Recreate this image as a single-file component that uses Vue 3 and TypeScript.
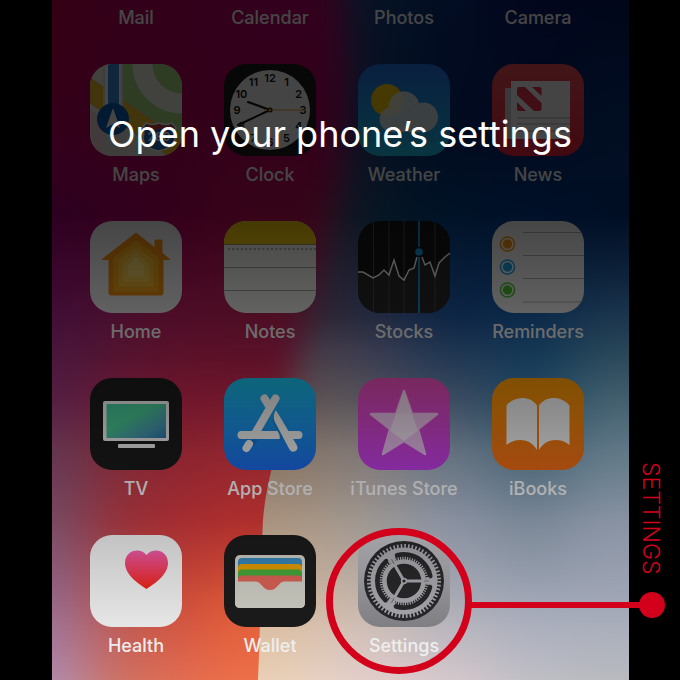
<script setup lang="ts">
type Rgb = [number, number, number]

interface Column {
  x: number
  width: number
  colors: string[]
}

const rows: string[][] = [
  ['Maps', 'Clock', 'Weather', 'News'],
  ['Home', 'Notes', 'Stocks', 'Reminders'],
  ['TV', 'App Store', 'iTunes Store', 'iBooks'],
  ['Health', 'Wallet', 'Settings'],
]
const topLabels: string[] = ['Mail', 'Calendar', 'Photos', 'Camera']
const apps: string[] = rows.flat()

// Share of light that the shade lets through, by height.
const shade: [number, number][] = [
  [0, 0.27], [215, 0.27], [313, 0.39], [430, 0.59], [535, 0.77], [627, 0.91], [680, 0.97],
]
function light(y: number): number {
  for (let i = 1; i < shade.length; i++) {
    const [y0, a] = shade[i - 1]
    const [y1, b] = shade[i]
    if (y <= y1) return a + ((b - a) * (y - y0)) / (y1 - y0)
  }
  return 0.97
}

function parse(hex: string): Rgb {
  return [1, 3, 5].map((i) => parseInt(hex.slice(i, i + 2), 16)) as Rgb
}
// Wallpaper tones are listed as seen through the shade, so undo it here.
function lift(hex: string, y: number): string {
  const t = light(y)
  return `rgb(${parse(hex).map((c) => Math.min(255, Math.round(c / t))).join(',')})`
}

const stops: number[] = [0, 130, 215, 313, 350, 400, 450, 520, 600, 680]
const leftColumns: Column[] = [
  { x: -150, width: 185, colors: ['#330012', '#33001a', '#2d0020', '#3f0e36', '#47163c', '#522044', '#623650', '#764b64', '#94688a', '#b08cae'] },
  { x: 35, width: 70, colors: ['#32001a', '#33001a', '#30001c', '#480e2c', '#52122e', '#6c1832', '#7c2836', '#963038', '#b8504c', '#cf7060'] },
  { x: 105, width: 60, colors: ['#33001a', '#33001a', '#34001a', '#4e0c26', '#5a1028', '#70162c', '#8a222e', '#a62c30', '#cc4c38', '#e46c50'] },
  { x: 165, width: 250, colors: ['#32001c', '#32001a', '#360418', '#4c0e24', '#581028', '#72182a', '#90262e', '#ae2e2c', '#e05a36', '#ee7048'] },
]
const rightColumns: Column[] = [
  { x: -150, width: 400, colors: ['#28081f', '#280c1f', '#28121e', '#34242e', '#463440', '#5c4a4c', '#84705f', '#a8927e', '#d2b496', '#ead0b4'] },
  { x: 250, width: 50, colors: ['#181024', '#200a20', '#1c1522', '#2c2634', '#443c48', '#5e5656', '#82766e', '#a69688', '#ccb6a6', '#e6d2c6'] },
  { x: 300, width: 60, colors: ['#041224', '#041120', '#041522', '#20283e', '#363a50', '#54525e', '#7c7678', '#9a9694', '#beb4ac', '#e2cccc'] },
  { x: 360, width: 80, colors: ['#020c22', '#010a1e', '#001226', '#0c2444', '#1e3450', '#3c4c60', '#62707e', '#8890a0', '#a8aab4', '#d4c8cc'] },
  { x: 440, width: 80, colors: ['#02061c', '#010a1e', '#001028', '#0a2848', '#123654', '#224a64', '#466274', '#788594', '#a0a6b6', '#bfbec6'] },
  { x: 520, width: 200, colors: ['#01061a', '#010e22', '#000e24', '#1a344c', '#284658', '#44606e', '#607886', '#8892a2', '#a0a6b6', '#b8babf'] },
]

const hours = Array.from({ length: 12 }, (_, i) => {
  const a = ((i + 1) * Math.PI) / 6
  return { n: i + 1, x: 46 + Math.sin(a) * 33, y: 50 - Math.cos(a) * 32 }
})
const houseLevels = [
  { d: 'M46 20 68 37V70H24V37Z', color: '#ffb01a' },
  { d: 'M46 26 63 40V65H29V40Z', color: '#ffc136' },
  { d: 'M46 32 58 43V60H34V43Z', color: '#ffd04f' },
  { d: 'M46 37 53 45V55H39V45Z', color: '#ffe070' },
]
</script>

<template>
  <main class="page">
    <div class="phone">
      <svg class="wallpaper" viewBox="0 0 577 680" preserveAspectRatio="none" aria-hidden="true">
        <defs>
          <filter id="spread" filterUnits="userSpaceOnUse" x="-150" y="0" width="880" height="680" color-interpolation-filters="sRGB">
            <feGaussianBlur stdDeviation="28 0" />
          </filter>
          <filter id="edge" filterUnits="userSpaceOnUse" x="-150" y="-100" width="880" height="880" color-interpolation-filters="sRGB">
            <feGaussianBlur stdDeviation="15" />
          </filter>
          <clipPath id="upper"><rect width="577" height="425" /></clipPath>
          <clipPath id="lower"><rect y="425" width="577" height="255" /></clipPath>
          <mask id="wave" maskUnits="userSpaceOnUse" x="0" y="0" width="577" height="680">
            <g clip-path="url(#upper)">
              <path filter="url(#edge)" fill="#fff" d="M-100-100H280Q300 120 276 215C262 290 240 370 225 450L208 780H-100Z" />
            </g>
            <g clip-path="url(#lower)">
              <path fill="#fff" d="M0 400H238C228 440 214 480 211 520C208 580 209 620 206 680H0Z" />
            </g>
          </mask>
          <template v-for="(set, s) in [leftColumns, rightColumns]" :key="s">
            <linearGradient v-for="(c, i) in set" :id="`tone-${s}-${i}`" :key="i" gradientUnits="userSpaceOnUse" x1="0" y1="0" x2="0" y2="680">
              <stop v-for="(y, k) in stops" :key="k" :offset="y / 680" :stop-color="lift(c.colors[k], y)" />
            </linearGradient>
          </template>
        </defs>
        <g filter="url(#spread)">
          <rect v-for="(c, i) in rightColumns" :key="i" :x="c.x" y="0" :width="c.width" height="680" :fill="`url(#tone-1-${i})`" />
        </g>
        <g mask="url(#wave)">
          <g filter="url(#spread)">
            <rect v-for="(c, i) in leftColumns" :key="i" :x="c.x" y="0" :width="c.width" height="680" :fill="`url(#tone-0-${i})`" />
          </g>
        </g>
      </svg>

      <div class="apps">
        <button v-for="name in topLabels" :key="name" type="button" class="app">
          <span class="name">{{ name }}</span>
        </button>
        <button v-for="name in apps" :key="name" type="button" class="app">
          <svg class="icon" viewBox="0 0 92 92" aria-hidden="true">
            <g v-if="name === 'Maps'">
              <rect width="92" height="92" fill="#f1efe6" />
              <path d="M33 0H92V76L33 36Z" fill="#a5dd80" />
              <path d="M52.500 0A39.500 39.500 0 0 0 92 39.500" fill="none" stroke="#f1efe6" stroke-width="20" />
              <path d="M0 14 92 77V92H78L0 39Z" fill="#f5c52c" stroke="#dca63a" />
              <path d="M0 46 13 54V92H0Z" fill="#f4d5d8" />
              <path d="M33 62 78 92H33Z" fill="#e4e4df" />
              <path d="M13 0H33V92H13Z" fill="#e2e2dd" />
              <path d="M15 0H31V60H15Z" fill="#fff" />
              <path d="M18 0H29V54H18Z" fill="#3c8be0" />
              <circle cx="23" cy="55" r="16" fill="#0b62b8" />
              <path d="M23 44 30 64 23 60 16 64Z" fill="#fff" />
              <path d="M56 59Q62 62 69 59Q76 62 82 59L86 64Q83 68 85 74Q84 84 69 87Q54 84 53 74Q55 68 52 64Z" fill="#2a68b8" stroke="#fff" stroke-width="1.500" />
              <path d="M57 60Q63 63 69 60Q75 63 81 60L84 65H54Z" fill="#d04038" />
              <text x="69" y="77" class="shield">280</text>
            </g>
            <g v-else-if="name === 'Clock'">
              <rect width="92" height="92" fill="#1a1a1a" />
              <circle cx="46" cy="46" r="40" fill="#fafafa" />
              <text v-for="h in hours" :key="h.n" :x="h.x" :y="h.y" class="hour">{{ h.n }}</text>
              <path d="M46 46 24 38M46 46 14 61" stroke="#111" stroke-width="2" stroke-linecap="round" />
              <path d="M40 46H82" stroke="#f79a28" />
              <circle cx="46" cy="46" r="2.500" fill="#111" />
              <circle cx="46" cy="46" r="1.500" fill="#f79a28" />
            </g>
            <g v-else-if="name === 'Weather'">
              <rect width="92" height="92" fill="url(#sky)" />
              <circle cx="29" cy="36" r="16" fill="#ffd000" />
              <path d="M34 68A12.500 12.500 0 0 1 30.500 43.500A15.500 15.500 0 0 1 61 39A14.800 14.800 0 1 1 65 68Z" fill="#f2f2ee" fill-opacity=".88" />
              <path d="M52 49A14.800 14.800 0 0 1 61 39" fill="none" stroke="#cfd8dc" />
            </g>
            <g v-else-if="name === 'News'">
              <rect width="92" height="92" fill="url(#news)" />
              <path d="M13 24H20V75H16Q13 75 13 72Z" fill="#d6d2d2" />
              <path d="M19 17H78V75H19Z" fill="#fafafa" />
              <path d="M25 25Q25 23 27 23H33L49.500 39V45Q49.500 47 47.500 47H42L25 31ZM40 23H47.500Q49.500 23 49.500 25V32ZM25 38 34 47H27Q25 47 25 45Z" fill="#f4324f" />
              <path d="M25 54H78M25 60H78M25 67H78" stroke="#b5b5b5" />
            </g>
            <g v-else-if="name === 'Home'">
              <rect width="92" height="92" fill="#fafafa" />
              <path d="M46 12 65 27V20Q65 19 66 19H71Q72 19 72 20V32L80 38.500H73V72Q73 74 71 74H21Q19 74 19 72V38.500H12Z" fill="#fb9412" stroke="#fb9412" stroke-linejoin="round" />
              <path v-for="(l, i) in houseLevels" :key="i" :d="l.d" :fill="l.color" :stroke="l.color" stroke-width="1.500" stroke-linejoin="round" />
            </g>
            <g v-else-if="name === 'Notes'">
              <rect width="92" height="92" fill="#fcfcfa" />
              <rect width="92" height="23" fill="#f9cf0e" />
              <path d="M0 23.500H92" stroke="#a79a70" />
              <path d="M4 28H92" stroke="#b4b4b0" stroke-width="2" stroke-dasharray="2 2.300" />
              <path d="M0 46.500H92M0 69.500H92" stroke="#a8a8a8" />
            </g>
            <g v-else-if="name === 'Stocks'">
              <rect width="92" height="92" fill="#161616" />
              <path d="M0 51H5L15 57 21 54 26 49 31 54 36 39 41 55 46 59 51 49 56 47 60 34H62L67 44 72 41 77 55 81 42 87 36 92 32V92H0Z" fill="#292929" />
              <path d="M15.500 0V92M31 0V92M46 0V92M77 0V92" stroke="#4a4a4a" />
              <path d="M0 51H5L15 57 21 54 26 49 31 54 36 39 41 55 46 59 51 49 56 47 59 36M64 36 67 44 72 41 77 55 81 42 87 36 92 32" fill="none" stroke="#fff" stroke-width="1.500" />
              <path d="M61 0V92" stroke="#10a0e8" stroke-width="1.800" />
              <circle cx="61" cy="31" r="4.500" fill="#10a0e8" stroke="#161616" stroke-width="1.500" />
            </g>
            <g v-else-if="name === 'Reminders'">
              <rect width="92" height="92" fill="#fbfbfb" />
              <path d="M31 11.500H92M31 34.500H92M31 57.500H92M31 81H92" stroke="#b4b4b4" />
              <g v-for="(c, i) in ['#f99710', '#1ba5ef', '#4fcc30']" :key="i" :fill="c">
                <circle cx="15.500" :cy="23 + i * 23" r="7.800" />
                <circle cx="15.500" :cy="23 + i * 23" r="6.300" fill="#fbfbfb" />
                <circle cx="15.500" :cy="23 + i * 23" r="4.700" />
              </g>
            </g>
            <g v-else-if="name === 'TV'">
              <rect width="92" height="92" fill="#1c1c1c" />
              <rect x="13" y="23" width="66" height="40" rx="2" fill="#fafafa" />
              <rect x="16.500" y="26" width="59.500" height="34" fill="url(#screen)" />
              <rect x="28" y="66" width="37" height="4" rx="1" fill="#fafafa" />
            </g>
            <g v-else-if="name === 'App Store'">
              <rect width="92" height="92" fill="url(#store)" />
              <g fill="none" stroke="#fafafa" stroke-width="8" stroke-linecap="round">
                <path d="M51.500 20.500 32 54M40.500 20.500 45 28M17.500 57H74.500" />
              </g>
              <path d="M17 61.500H34L30 68 22 61.500Z" fill="#1b75dc" />
              <path d="M22.500 70 25 66" stroke="#fafafa" stroke-width="8" stroke-linecap="round" />
              <path d="M52 32C48 38 48 43 51 49L54 54Q57 58 55 63H61L53 31Z" fill="#1a87dc" />
              <path d="M52 32C49 37 49 41 52 46L65.500 71.500Q68 75 71.500 73Q74.500 71 73 67.500Z" fill="#fafafa" />
            </g>
            <g v-else-if="name === 'iTunes Store'">
              <rect width="92" height="92" fill="url(#tunes)" />
              <path d="M46 13 54 36H79L60 51 67 76 46 63 25 76 32 51 13 36H38Z" fill="#fff" opacity=".68" stroke="#fff" stroke-width="2.500" stroke-linejoin="round" />
              <path d="M46 12 54 36 60 53 46 63 32 53 38 36Z" fill="#fff" fill-opacity=".45" />
              <path d="M38 36H54L60 52 46 63 32 52Z" fill="#fff" fill-opacity=".3" />
            </g>
            <g v-else-if="name === 'iBooks'">
              <rect width="92" height="92" fill="url(#books)" />
              <path d="M14.500 27.500C22 18 38 17 45 27.500V72C38 59 22 60 14.500 67ZM77.500 27.500C70 18 54 17 47 27.500V72C54 59 70 60 77.500 67Z" fill="#fdfdfd" />
            </g>
            <g v-else-if="name === 'Health'">
              <rect width="92" height="92" fill="#fdfdfd" />
              <path d="M56.500 54C49 49 35 40 35 28C35 15 50 12 56.500 20C63 12 78 15 78 28C78 40 64 49 56.500 54Z" fill="url(#heart)" />
            </g>
            <g v-else-if="name === 'Wallet'">
              <rect width="92" height="92" fill="#1d1d1d" />
              <rect x="11" y="20" width="70" height="53" rx="5" fill="#dcdbd1" />
              <rect x="14" y="23" width="64" height="30" rx="4" fill="#3a90c4" />
              <rect x="14" y="29" width="64" height="26" rx="4" fill="#f2a600" />
              <rect x="14" y="34.500" width="64" height="22" rx="4" fill="#4bb23c" />
              <path d="M14 46V44Q14 40.500 18 40.500H74Q78 40.500 78 44V60H14Z" fill="#e8685b" />
              <path d="M11 46.500H31C38 46.500 38 55 46 55S54 46.500 61 46.500H81V68Q81 73 76 73H16Q11 73 11 68Z" fill="#dcdbd1" />
            </g>
            <g v-else>
              <rect width="92" height="92" fill="url(#steel)" />
              <g fill="none">
                <circle cx="46" cy="46" r="40" fill="#2b2b2d" />
                <circle cx="46" cy="46" r="35" stroke="#b4b4ba" stroke-width="4" stroke-dasharray="1.700 1.965" />
                <circle cx="46" cy="46" r="29" stroke="#b4b4ba" stroke-width="9" />
                <circle cx="46" cy="46" r="26.500" stroke="#2b2b2d" stroke-width="5" stroke-linecap="round" stroke-dasharray="43 12.500" stroke-dashoffset="-6.250" />
                <circle cx="46" cy="46" r="23.500" stroke="#2b2b2d" stroke-width="3" />
                <circle cx="46" cy="46" r="22.500" stroke="#b4b4ba" stroke-width="3.500" stroke-dasharray="1.200 1.156" />
                <circle cx="46" cy="46" r="19.500" stroke="#b4b4ba" stroke-width="4.500" />
                <g v-for="a in [0, 120, 240]" :key="a" :transform="`rotate(${a} 46 46)`">
                  <path d="M46 45H66L71 42.500V49.500L66 47H46Z" fill="#b4b4ba" stroke="#b4b4ba" stroke-width="1" stroke-linejoin="round" />
                  <path d="M66 46H71" stroke="#77777c" stroke-width="1" />
                </g>
                <circle cx="46" cy="46" r="3.200" fill="#b4b4ba" />
                <circle cx="46" cy="46" r="1.600" fill="#2b2b2d" />
              </g>
            </g>
          </svg>
          <span class="name">{{ name }}</span>
        </button>
      </div>
      <div class="shade"></div>
    </div>

    <h1 class="title">Open your phone’s settings</h1>
    <div class="callout">
      <span class="ring"></span>
      <span class="line"></span>
      <span class="dot"></span>
    </div>
    <p class="tag">SETTINGS</p>

    <svg class="defs" aria-hidden="true">
      <defs>
        <linearGradient id="sky" x2="0" y2="1"><stop stop-color="#2173e8" /><stop offset="1" stop-color="#1cc2ec" /></linearGradient>
        <linearGradient id="news" x2="0" y2="1"><stop stop-color="#f04f58" /><stop offset="1" stop-color="#f5203f" /></linearGradient>
        <linearGradient id="screen" x2="1" y2="1"><stop stop-color="#45d0a4" /><stop offset=".4" stop-color="#4cd29a" /><stop offset=".75" stop-color="#4aa0b8" /><stop offset="1" stop-color="#2c7cb4" /></linearGradient>
        <linearGradient id="store" x2="0" y2="1"><stop stop-color="#1ac8f4" /><stop offset="1" stop-color="#1d6cf2" /></linearGradient>
        <linearGradient id="tunes" x2="0" y2="1"><stop stop-color="#ef4fbb" /><stop offset="1" stop-color="#c840f2" /></linearGradient>
        <linearGradient id="books" x2="0" y2="1"><stop stop-color="#ff9f04" /><stop offset="1" stop-color="#fb7018" /></linearGradient>
        <linearGradient id="heart" x2="0" y2="1"><stop stop-color="#ff5fb4" /><stop offset="1" stop-color="#fc2414" /></linearGradient>
        <linearGradient id="steel" x2="0" y2="1"><stop stop-color="#d2d2d8" /><stop offset="1" stop-color="#8b8b90" /></linearGradient>
      </defs>
    </svg>
  </main>
</template>

<style>
body {
  margin: 0;
  background: #000;
}
</style>

<style scoped>
.page {
  position: relative;
  min-height: 100vh;
  padding: 0 51px 0 52px;
  box-sizing: border-box;
  overflow: hidden;
  font-family: Inter, 'Liberation Sans', sans-serif;
  background: #000;
}
.phone {
  position: relative;
  min-height: 100vh;
  overflow: hidden;
}
.wallpaper,
.shade {
  position: absolute;
  inset: 0;
  width: 100%;
  height: 100%;
}
.shade {
  pointer-events: none;
  background: linear-gradient(
    rgba(0, 0, 0, 0.73) 0%,
    rgba(0, 0, 0, 0.73) 31.6%,
    rgba(0, 0, 0, 0.61) 46%,
    rgba(0, 0, 0, 0.41) 63.2%,
    rgba(0, 0, 0, 0.23) 78.7%,
    rgba(0, 0, 0, 0.09) 92.2%,
    rgba(0, 0, 0, 0.03) 100%
  );
}
.apps {
  position: relative;
  display: grid;
  grid-template-columns: repeat(4, 92px);
  justify-content: space-between;
  row-gap: 35px;
  padding: 7px 45px 23px 38px;
}
.app {
  display: flex;
  flex-direction: column;
  align-items: center;
  gap: 8px;
  padding: 0;
  border: 0;
  background: none;
  color: #fff;
  font: inherit;
}
.icon {
  display: block;
  width: 92px;
  height: 92px;
  border-radius: 22px;
}
.name {
  font-size: 18px;
  font-weight: 500;
  line-height: 22px;
  white-space: nowrap;
}
.hour {
  font-size: 11px;
  font-weight: 600;
  text-anchor: middle;
  fill: #111;
}
.shield {
  font-size: 12px;
  font-weight: 600;
  text-anchor: middle;
  fill: #fff;
}
.title {
  position: absolute;
  top: 109px;
  left: 0;
  right: 0;
  margin: 0;
  font-size: 36px;
  font-weight: 400;
  line-height: 50px;
  text-align: center;
  white-space: nowrap;
  color: #fff;
}
.callout {
  position: absolute;
  top: 528px;
  left: 48%;
  right: 15px;
  display: flex;
  align-items: center;
}
.ring {
  width: 146px;
  height: 146px;
  box-sizing: border-box;
  border: 7px solid #d3001b;
  border-radius: 50%;
}
.line {
  flex: 1;
  height: 6px;
  margin: 8px -4px 0 -1px;
  background: #d3001b;
}
.dot {
  width: 26px;
  height: 26px;
  margin-top: 8px;
  border-radius: 50%;
  background: #d3001b;
}
.tag {
  position: absolute;
  top: 462px;
  right: 15px;
  margin: 0;
  font-size: 23px;
  font-weight: 300;
  line-height: 28px;
  writing-mode: vertical-rl;
  color: #d3001b;
}
.defs {
  position: absolute;
  width: 0;
  height: 0;
}
</style>
